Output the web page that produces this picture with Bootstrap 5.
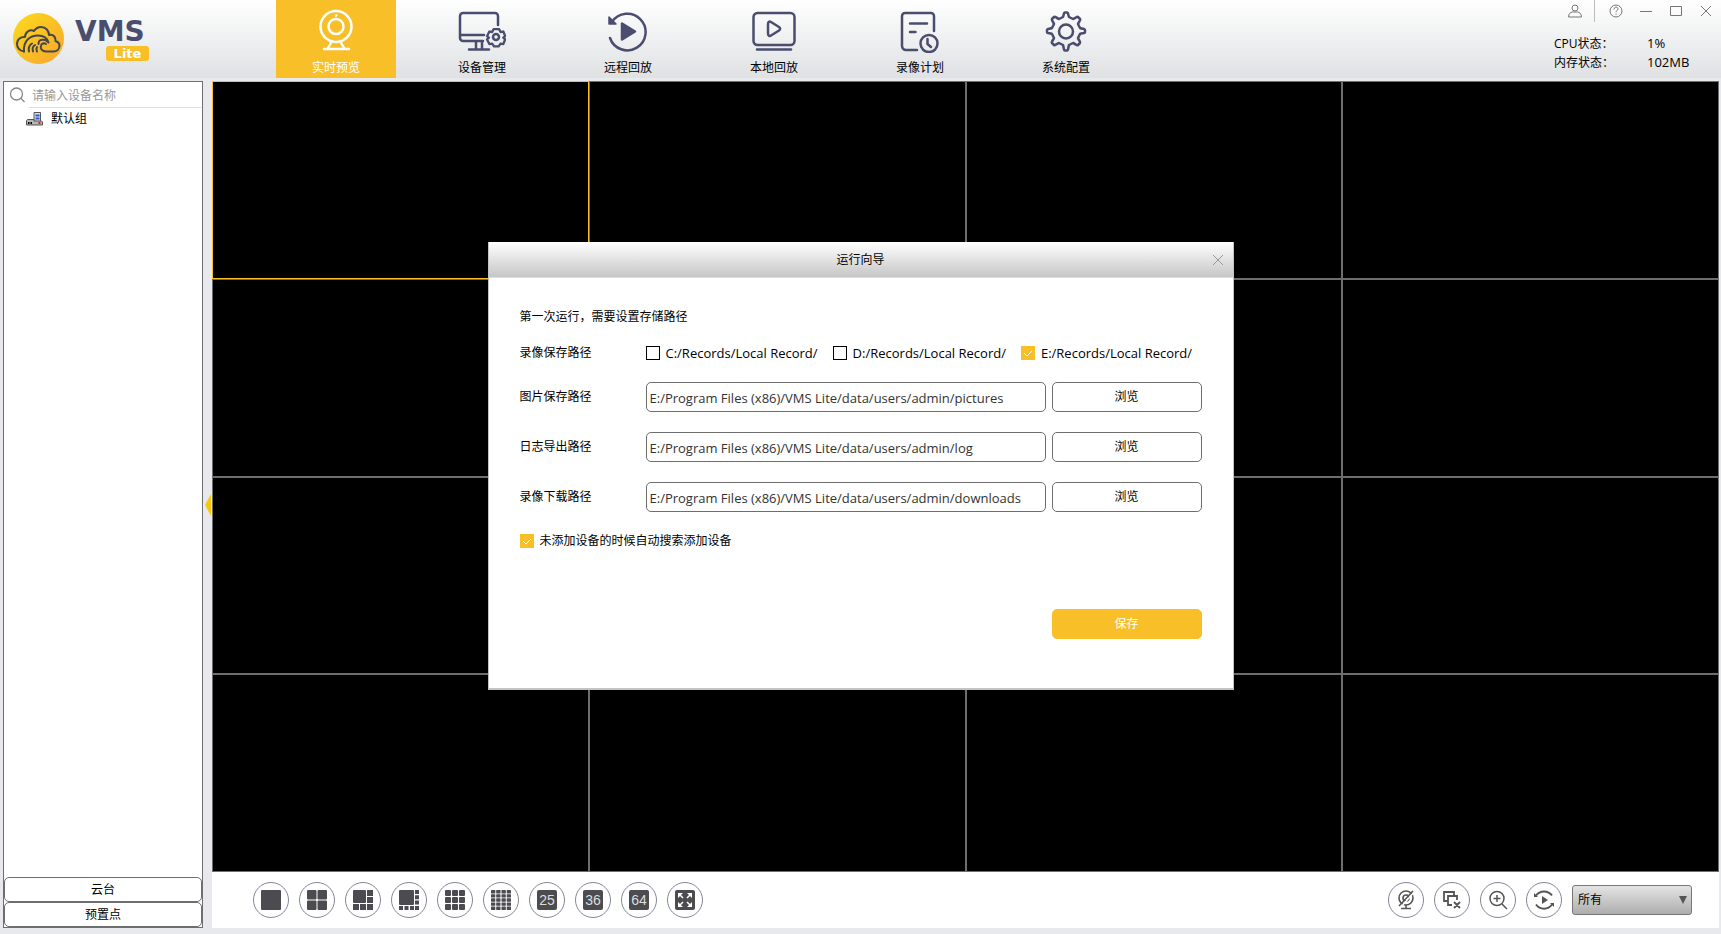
<!DOCTYPE html>
<html lang="zh-CN">
<head>
<meta charset="utf-8">
<meta name="viewport" content="width=device-width, initial-scale=1">
<title>VMS Lite</title>
<link href="https://cdn.jsdelivr.net/npm/bootstrap@5.3.0/dist/css/bootstrap.min.css" rel="stylesheet">
<style>
:root { --amber:#f9bf28; --ink:#4a4d6e; --line:#6e6e6e; --panel:#e7e9ed; }
body { font-family:"Open Sans","Noto Sans CJK SC",sans-serif; font-size:12px; line-height:18px; color:#000; background:var(--panel); }
button, input, select { font:inherit; color:inherit; }
svg { display:block; flex:none; }
.topbar { height:78px; background:linear-gradient(#fff,#dfe1e3); }
.brand-area { width:276px; padding:13px 0 0 13px; gap:11px; }
.brand-text { width:74px; padding-top:9px; gap:4px; }
.brand-name { font:bold 28px/20px "DejaVu Sans",sans-serif; color:var(--ink); }
.brand-tag { width:43px; height:15px; font:bold 13px/15px "DejaVu Sans",sans-serif; color:#fff; background:var(--amber); border-radius:3px; }
.main-nav { gap:26px; }
.main-nav .nav-link { width:120px; height:78px; padding:9px 0 0; color:#000; gap:6px; border-radius:0; }
.main-nav .nav-link.active { background:var(--amber); color:#fff; }
.win-tools { height:22px; }
.win-btn { width:30px; height:22px; padding:0; border:0; background:none; color:#777; display:flex; align-items:center; justify-content:center; }
.user-btn { width:40px; border-right:1px solid #bbb; margin-right:6px; }
.status { grid-template-columns:93px 74px; line-height:19px; font-size:12px; margin-top:12px; }
.status dt { font-weight:400; }
.status dd, .latin { font-size:13px; }
.workspace { padding:3px 2px 6px 3px; }
.sidebar { width:200px; border:1px solid var(--line); }
.search-row { height:26px; padding-left:5px; gap:4px; }
.search-row input { width:100%; height:26px; border:0; border-bottom:1px solid #ddd; outline:0; padding:2px 0 0 3px; margin-right:1px; }
.search-row input::placeholder { color:#999; opacity:1; }
.tree-item { padding:2px 0 0 22px; gap:8px; }
.side-btn { height:25px; border:1px solid var(--line); border-radius:5px; background:#fff; padding:0; }
.splitter { width:9px; padding:0 1px 0 0; border:0; background:none; }
.wall { background:#000; grid-template-columns:repeat(4,1fr); grid-template-rows:repeat(4,1fr); border:0; }
.cell { border:1px solid var(--line); }
.cell.selected { border-color:var(--amber); }
.toolbar { height:56px; padding:0 27px 0 41px; }
.tool-group { gap:10px; }
.round-btn { width:36px; height:36px; border:1px solid #81869a; border-radius:50%; background:#fff; color:#4b4b50; padding:0; display:flex; align-items:center; justify-content:center; }
.num { width:20px; height:20px; border-radius:2px; background:#4b4b50; color:#ddd; font:14px/20px "Liberation Sans",sans-serif; }
.stream { width:120px; }
.stream select { height:30px; width:100%; appearance:none; border:1px solid #777; border-radius:3px; padding:0 5px; background:linear-gradient(#e4e4e4,#adadad); }
.stream svg { right:5px; top:11px; pointer-events:none; }
.overlay { padding-bottom:2px; }
.wizard { width:746px; border:solid #c4c4c4; border-width:0 1px 2px; background:#fff; }
.wizard-head { height:36px; background:linear-gradient(#fff,#c6c6c6); border-bottom:1px solid #ddd; }
.wizard-close { right:0; top:0; height:35px; color:#999; }
.wizard-body { padding:29px 31px 49px 31px; }
.wizard-intro { line-height:20px; }
.wizard-row { gap:6px; margin-bottom:20px; }
.record-row > span { width:126px; }
.wizard-row > label { width:120px; }
.wizard-row input { height:30px; border:1px solid var(--line); border-radius:5px; padding:2px 3px 0; color:#333; font-size:13px; }
.wizard-btn { width:150px; height:30px; border:1px solid var(--line); border-radius:5px; background:#fff; padding:0; }
.wizard-btn.save { border-color:var(--amber); background:var(--amber); color:#fff; }
.wizard-foot { margin-top:60px; }
.record-row { margin:16px 0 19px; height:20px; }
.record-list { gap:15px; }
.tick { gap:6px; height:17px; white-space:nowrap; }
.tick input { appearance:none; width:14px; height:14px; margin:0; border:1px solid #000; background:#fff; }
.tick input:checked { border-color:var(--amber); background:var(--amber) url("data:image/svg+xml,%3Csvg xmlns='http://www.w3.org/2000/svg' viewBox='0 0 12 12'%3E%3Cpath d='M2 6l3 3 5-5' fill='none' stroke='white'/%3E%3C/svg%3E"); }
</style>
</head>
<body class="vh-100 d-flex flex-column overflow-hidden">
<header class="topbar d-flex flex-shrink-0">
  <div class="brand-area d-flex align-items-start">
    <svg width="51" height="51" viewBox="0 0 51 51" fill="none">
      <defs><linearGradient id="sun" x1="0" y1="0" x2="1" y2="1"><stop stop-color="#fddb1c"/><stop offset="1" stop-color="#f6a52e"/></linearGradient></defs>
      <circle cx="25.500" cy="25.500" r="25.500" fill="url(#sun)"/>
      <g stroke="#45464c" stroke-width="2" stroke-linecap="round" stroke-linejoin="round">
        <path d="M11 38.500C6 38 4 34 4 31c0-5 4-7.500 8-7 0-5 5-8 9-6 2-3 4-4 7-4 5 0 8 4 8 8 5-1 7 3 6.500 6 3 1 4 2.500 4 4.500 0 4-3 6-6 6H33c-4 0-6-3-5-6 .5-2 3-3 5-1.500"/>
        <path d="M11 38.500C10 28 17 22.500 25 22.500c5 0 9 2 10.500 7l-3-2.500c-6-1-7 1-7 4"/>
        <path d="M16 38.500c-1-4 0-6 3-8M20 38.500c-1-4 0-5 2-6.500M24 38.500c-1-2-1-3 0-4.500"/>
      </g>
    </svg>
    <div class="brand-text d-flex flex-column">
      <span class="brand-name">VMS</span>
      <span class="brand-tag text-center align-self-end">Lite</span>
    </div>
  </div>
  <nav class="nav main-nav flex-nowrap flex-grow-1">
    <a class="nav-link active d-flex flex-column align-items-center" href="#">
      <svg width="44" height="44" viewBox="0 0 44 44" fill="none" stroke="#fff" stroke-width="2.500" stroke-linecap="round" stroke-linejoin="round"><circle cx="22" cy="17.500" r="15.500"/><circle cx="22" cy="17.500" r="7.500"/><path d="M18 32l-4 7M26 32l4 7M10 40h25"/><circle cx="22" cy="6.500" r="1" stroke-width="1"/></svg>
      <span>实时预览</span></a>
    <a class="nav-link d-flex flex-column align-items-center" href="#">
      <svg width="48" height="44" viewBox="0 0 48 44" fill="none" stroke="#4a4d6e" stroke-width="2.500" stroke-linecap="round" stroke-linejoin="round"><path d="M25 32H5a3 3 0 0 1-3-3V7a3 3 0 0 1 3-3h32a3 3 0 0 1 3 3v9M2 26h24M18 32v8M24 32v8M11 40.500h20"/><path d="M35 18.500h6l1.500 3 3-.5 2 5-2 1.500 2 2-2 5-3-.5-2 3h-5l-2-3-3 .5-2.500-5 2-2-2-1.500 2.500-5 3 .5z" transform="translate(3 3) scale(.93)"/><circle cx="38" cy="28" r="3"/></svg>
      <span>设备管理</span></a>
    <a class="nav-link d-flex flex-column align-items-center" href="#">
      <svg width="44" height="44" viewBox="0 0 44 44" fill="none" stroke="#4a4d6e" stroke-width="2.500" stroke-linecap="round" stroke-linejoin="round"><path d="M6 13a18.300 18.300 0 1 1-2 16"/><path d="M3 8v7h7z" fill="#4a4d6e" stroke-width="1.500"/><path d="M16 14.500v16L29 22.500z" fill="#4a4d6e"/></svg>
      <span>远程回放</span></a>
    <a class="nav-link d-flex flex-column align-items-center" href="#">
      <svg width="44" height="44" viewBox="0 0 44 44" fill="none" stroke="#4a4d6e" stroke-width="2.500" stroke-linecap="round" stroke-linejoin="round"><rect x="1.500" y="4" width="41" height="32" rx="4"/><path d="M5 40.500h34"/><path d="M16 15c0-2 1.500-3 3-2l8 5c1.500 1 1.500 2.500 0 3.500l-8 5c-1.500 1-3 0-3-2z"/></svg>
      <span>本地回放</span></a>
    <a class="nav-link d-flex flex-column align-items-center" href="#">
      <svg width="44" height="44" viewBox="0 0 44 44" fill="none" stroke="#4a4d6e" stroke-width="2.500" stroke-linecap="round" stroke-linejoin="round"><path d="M19 41H8a4 4 0 0 1-4-4V7a3 3 0 0 1 3-3h26a3 3 0 0 1 3 3v15M12 14.500h17M12 23h5.500"/><circle cx="31" cy="34.500" r="8.500"/><path d="M29.500 30v5l3.500 3"/></svg>
      <span>录像计划</span></a>
    <a class="nav-link d-flex flex-column align-items-center" href="#">
      <svg width="44" height="44" viewBox="0 0 44 44" fill="none" stroke="#4a4d6e" stroke-width="2.500" stroke-linecap="round" stroke-linejoin="round"><path d="M19 8c1-2 .5-4.500 2-4.500h2c1.500 0 1 2.500 2 4.500l4 2c3-1 4-3 5-2l2 2c1 1-1 2.500-2 5l2 4c2.500 1 5 .5 5 2v2c0 1.500-2.500 1-5 2l-2 4c1 3 3 4 2 5l-2 2c-1 1-2.500-1-5-2l-4 2c-1 3-.5 5.500-2 5.500h-2c-1.500 0-1-2.500-2-5.500l-4-2c-3 1-4 3-5 2l-2-2c-1-1 1-2.500 2-5l-2-4c-2.500-1-5-.5-5-2v-2c0-1.500 2.500-1 5-2l2-4c-1-3-3-4-2-5l2-2c1-1 2.500 1 5 2z"/><circle cx="22" cy="22.500" r="7"/></svg>
      <span>系统配置</span></a>
  </nav>
  <div class="flex-shrink-0">
    <div class="win-tools d-flex justify-content-end">
      <button class="win-btn user-btn" aria-label="用户"><svg width="14" height="14" viewBox="0 0 14 14" fill="none" stroke="currentColor"><circle cx="7" cy="4" r="3"/><path d="M.5 13c0-3 2-5 4-5h5c2 0 4 2 4 5z"/></svg></button>
      <button class="win-btn" aria-label="帮助"><svg width="14" height="14" viewBox="0 0 14 14" fill="none" stroke="currentColor"><circle cx="7" cy="7" r="6"/><path d="M5 5.500c0-3 4-3 4-.5 0 1.500-2 1.500-2 3M7 9.500v1.200"/></svg></button>
      <button class="win-btn" aria-label="最小化"><svg width="12" height="12" stroke="currentColor"><path d="M0 6.500h12"/></svg></button>
      <button class="win-btn" aria-label="最大化"><svg width="12" height="12" fill="none" stroke="currentColor"><path d="M.5 1.500h11v9H.5z"/></svg></button>
      <button class="win-btn" aria-label="关闭"><svg width="10" height="10" stroke="currentColor"><path d="M0 0l10 10M10 0L0 10"/></svg></button>
    </div>
    <dl class="status d-grid mb-0">
      <dt>CPU状态：</dt><dd class="mb-0">1%</dd>
      <dt>内存状态：</dt><dd class="mb-0">102MB</dd>
    </dl>
  </div>
</header>

<div class="workspace d-flex flex-grow-1">
  <aside class="sidebar bg-white d-flex flex-column flex-shrink-0">
    <div class="search-row d-flex align-items-center">
      <svg width="16" height="16" viewBox="0 0 16 16" fill="none" stroke="#888" stroke-width="1.300"><circle cx="7.500" cy="7" r="6"/><path d="M12 11.500l3.500 3.500"/></svg>
      <input type="text" placeholder="请输入设备名称" aria-label="请输入设备名称">
    </div>
    <div class="tree-item d-flex align-items-center">
      <svg width="17" height="14" viewBox="0 0 17 14"><path d="M8 .5h6.500v9H8z" fill="#ddd" stroke="#555"/><path d="M9.500 2.500h4v2h-4zM9.500 5.500h4v2h-4z" fill="#2a5bd0"/><path d="M.5 8.500l1-1H8v1.500h7.500l1 1v3H.5z" fill="#b5b5b5" stroke="#555"/><path d="M2 10h1.500v2H2zM4.500 10H6v2H4.500z" fill="#000"/><path d="M12.500 10h2v2h-2z" fill="#e02020"/></svg>
      <span>默认组</span>
    </div>
    <div class="mt-auto d-flex flex-column">
      <button class="side-btn">云台</button>
      <button class="side-btn">预置点</button>
    </div>
  </aside>
  <button class="splitter d-flex align-items-center justify-content-end" aria-label="收起列表"><svg width="6" height="22"><path d="M6 0v22L0 11z" fill="#f9c80e"/></svg></button>
  <main class="flex-grow-1 d-flex flex-column">
    <div class="wall d-grid flex-grow-1">
      <div class="cell selected"></div><div class="cell"></div><div class="cell"></div><div class="cell"></div>
      <div class="cell"></div><div class="cell"></div><div class="cell"></div><div class="cell"></div>
      <div class="cell"></div><div class="cell"></div><div class="cell"></div><div class="cell"></div>
      <div class="cell"></div><div class="cell"></div><div class="cell"></div><div class="cell"></div>
    </div>
    <div class="toolbar bg-white d-flex align-items-center justify-content-between">
      <div class="tool-group d-flex">
        <button class="round-btn" aria-label="1 画面"><svg width="20" height="20" fill="currentColor"><rect width="20" height="20" rx="1"/></svg></button>
        <button class="round-btn" aria-label="4 画面"><svg width="20" height="20" fill="currentColor"><rect width="9.500" height="9.500" rx="1"/><rect x="10.500" width="9.500" height="9.500" rx="1"/><rect y="10.500" width="9.500" height="9.500" rx="1"/><rect x="10.500" y="10.500" width="9.500" height="9.500" rx="1"/></svg></button>
        <button class="round-btn" aria-label="6 画面"><svg width="20" height="20" fill="currentColor"><rect width="13" height="13" rx="1"/><path d="M14 0h6v6h-6zM14 7h6v6h-6zM14 14h6v6h-6zM7 14h6v6H7zM0 14h6v6H0z"/></svg></button>
        <button class="round-btn" aria-label="10 画面"><svg width="20" height="20" fill="currentColor"><rect width="15" height="15" rx="1"/><path d="M16 0h4v4h-4zM16 5.300h4v4h-4zM16 10.600h4v4h-4zM16 16h4v4h-4zM11 16h4v4h-4zM5.500 16h4v4h-4zM0 16h4v4H0z"/></svg></button>
        <button class="round-btn" aria-label="9 画面"><svg width="20" height="20" fill="currentColor"><defs><g id="row3"><rect width="6" height="6" rx="1"/><rect x="7" width="6" height="6" rx="1"/><rect x="14" width="6" height="6" rx="1"/></g></defs><use href="#row3"/><use href="#row3" y="7"/><use href="#row3" y="14"/></svg></button>
        <button class="round-btn" aria-label="16 画面"><svg width="20" height="20" fill="currentColor"><defs><g id="row4"><rect width="4.300" height="3.400" rx=".5"/><rect x="5.200" width="4.300" height="3.400" rx=".5"/><rect x="10.500" width="4.300" height="3.400" rx=".5"/><rect x="15.700" width="4.300" height="3.400" rx=".5"/></g></defs><use href="#row4"/><use href="#row4" y="4.150"/><use href="#row4" y="8.300"/><use href="#row4" y="12.450"/><use href="#row4" y="16.600"/></svg></button>
        <button class="round-btn"><span class="num">25</span></button>
        <button class="round-btn"><span class="num">36</span></button>
        <button class="round-btn"><span class="num">64</span></button>
        <button class="round-btn" aria-label="全屏"><svg width="20" height="20"><rect width="20" height="20" rx="2" fill="#4b4b50"/><path d="M3 3h5L3 8zM17 3v5l-5-5zM3 17v-5l5 5zM17 17h-5l5-5z" fill="#fff"/><path d="M4 4l4 4M16 4l-4 4M4 16l4-4M16 16l-4-4" stroke="#fff" stroke-width="1.500"/></svg></button>
      </div>
      <div class="tool-group d-flex align-items-center">
        <button class="round-btn" aria-label="关闭全部"><svg width="20" height="20" fill="none" stroke="#555" stroke-width="1.600"><circle cx="10" cy="8" r="7"/><circle cx="10" cy="8" r="3"/><path d="M10 15v3M5 18.500h10"/><path d="M18.500 1.500L5 17" stroke="#fff" stroke-width="1.500"/><path d="M17 1L3 16"/></svg></button>
        <button class="round-btn" aria-label="关闭窗口"><svg width="20" height="20" fill="none" stroke="#555" stroke-width="1.800"><path d="M6 11H2V2h10v3M10 15H6V6h9v4M12 12l6 6M18 12l-6 6"/></svg></button>
        <button class="round-btn" aria-label="放大"><svg width="20" height="20" fill="none" stroke="#555" stroke-width="1.500"><circle cx="9" cy="8.500" r="7"/><path d="M9 5v7M5.500 8.500h7M14 14l5 5"/></svg></button>
        <button class="round-btn" aria-label="轮巡"><svg width="20" height="20" fill="none" stroke="#555" stroke-width="2"><path d="M2 5.500c4-5.500 12-5.500 16 0M2 14.500c4 5.500 12 5.500 16 0"/><path d="M0 3v4h4zM20 17v-4h-4zM8 6v8l6-4z" fill="#555" stroke="none"/></svg></button>
        <div class="stream position-relative">
          <select aria-label="设备筛选"><option>所有</option></select>
          <svg class="position-absolute" width="8" height="8"><path d="M0 0h8L4 8z" fill="#555"/></svg>
        </div>
      </div>
    </div>
  </main>
</div>

<div class="overlay position-fixed top-0 start-0 w-100 h-100 d-flex align-items-center justify-content-center">
  <section class="wizard" role="dialog" aria-labelledby="wizardTitle">
    <div class="wizard-head position-relative d-flex align-items-center justify-content-center">
      <span id="wizardTitle">运行向导</span>
      <button class="win-btn wizard-close position-absolute" aria-label="关闭"><svg width="10" height="10" stroke="currentColor"><path d="M0 0l10 10M10 0L0 10"/></svg></button>
    </div>
    <form class="wizard-body">
      <div class="wizard-intro">第一次运行，需要设置存储路径</div>
      <div class="record-row d-flex align-items-center">
        <span>录像保存路径</span>
        <div class="record-list d-flex flex-grow-1 latin">
          <label class="tick d-flex align-items-center"><input type="checkbox">C:/Records/Local Record/</label>
          <label class="tick d-flex align-items-center"><input type="checkbox">D:/Records/Local Record/</label>
          <label class="tick d-flex align-items-center"><input type="checkbox" checked>E:/Records/Local Record/</label>
        </div>
      </div>
      <div class="wizard-row d-flex align-items-center">
        <label for="pic">图片保存路径</label>
        <input id="pic" class="flex-grow-1" type="text" value="E:/Program Files (x86)/VMS Lite/data/users/admin/pictures">
        <button type="button" class="wizard-btn">浏览</button>
      </div>
      <div class="wizard-row d-flex align-items-center">
        <label for="log">日志导出路径</label>
        <input id="log" class="flex-grow-1" type="text" value="E:/Program Files (x86)/VMS Lite/data/users/admin/log">
        <button type="button" class="wizard-btn">浏览</button>
      </div>
      <div class="wizard-row d-flex align-items-center">
        <label for="down">录像下载路径</label>
        <input id="down" class="flex-grow-1" type="text" value="E:/Program Files (x86)/VMS Lite/data/users/admin/downloads">
        <button type="button" class="wizard-btn">浏览</button>
      </div>
      <label class="tick d-flex align-items-center"><input type="checkbox" checked>未添加设备的时候自动搜索添加设备</label>
      <div class="wizard-foot d-flex justify-content-end"><button type="button" class="wizard-btn save">保存</button></div>
    </form>
  </section>
</div>
<script src="https://cdn.jsdelivr.net/npm/bootstrap@5.3.0/dist/js/bootstrap.bundle.min.js"></script>
</body>
</html>
